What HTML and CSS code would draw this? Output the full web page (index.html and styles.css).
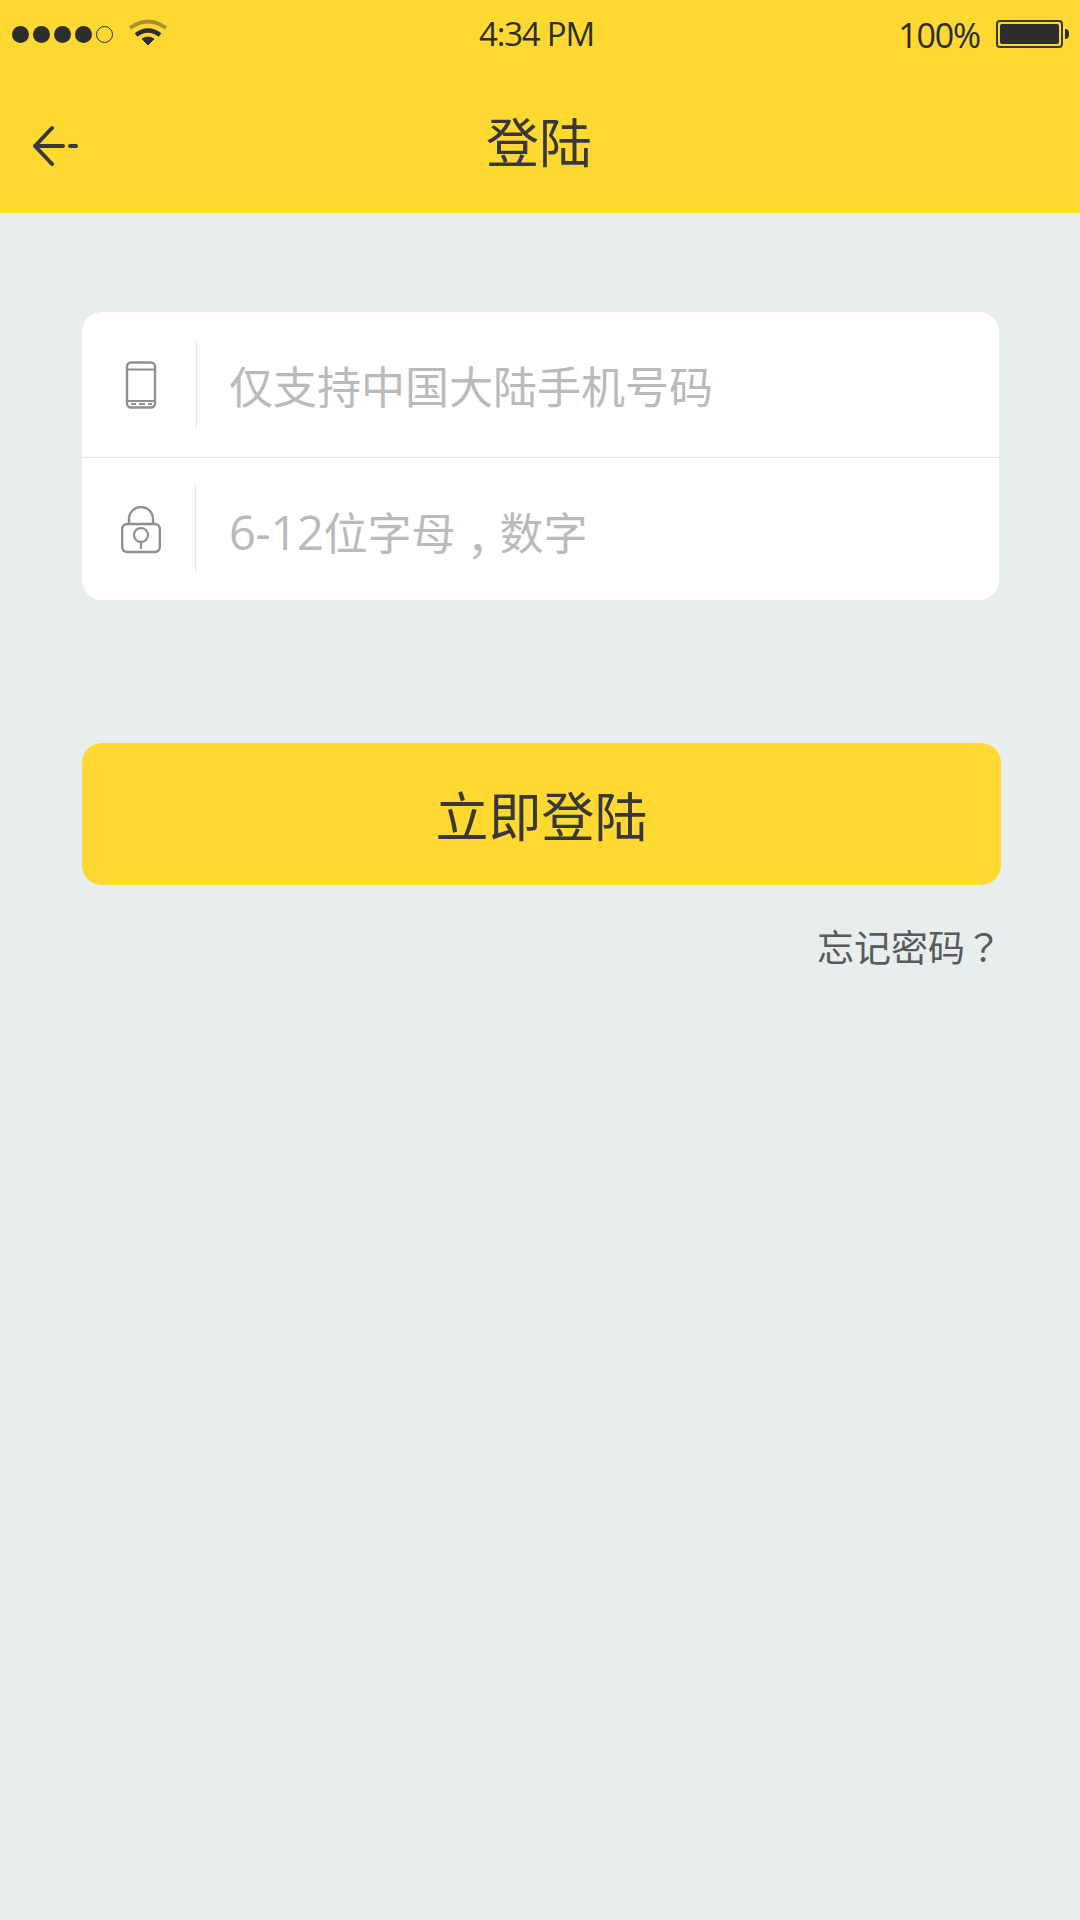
FILE: index.html
```html
<!DOCTYPE html>
<html lang="zh-CN">
<head>
    <meta charset="UTF-8">
    <meta name="viewport" content="width=device-width, initial-scale=1.0">
    <title>登陆</title>
    <link rel="stylesheet" href="styles.css">
</head>
<body>
    <header class="top">
        <div class="status">
            <div class="status-left">
                <span class="dot"></span>
                <span class="dot"></span>
                <span class="dot"></span>
                <span class="dot"></span>
                <span class="dot dot-empty"></span>
                <svg class="wifi" width="40" height="28" viewBox="0 0 40 28">
                    <path d="M2 10 Q20 -3 38 10" fill="none" stroke="#a8902c" stroke-width="4"/>
                    <path d="M8 17 Q20 8 32 17" fill="none" stroke="#2d2d2d" stroke-width="4.5"/>
                    <path d="M14 21 Q20 17 26 21 L20 27 Z" fill="#2d2d2d" stroke="#2d2d2d" stroke-linejoin="round"/>
                </svg>
            </div>
            <div class="time">4:34 PM</div>
            <div class="status-right">
                <span class="percent">100%</span>
                <div class="battery"><div class="battery-fill"></div></div>
                <div class="battery-tip"></div>
            </div>
        </div>
        <nav class="nav">
            <svg class="back" width="50" height="44" viewBox="0 0 50 44">
                <path d="M19 4 L2 22 L19 40 M2 22 H30" fill="none" stroke="#383838" stroke-width="4" stroke-linecap="round" stroke-linejoin="round"/>
                <path d="M37 22 H43" fill="none" stroke="#383838" stroke-width="4" stroke-linecap="round"/>
            </svg>
            <h1 class="nav-title">登陆</h1>
        </nav>
    </header>

    <main class="content">
        <form class="card">
            <div class="field field-phone">
                <div class="field-icon">
                    <svg width="32" height="48" viewBox="0 0 32 48">
                        <rect x="2" y="1.5" width="28" height="45" rx="4" fill="none" stroke="#8f8f8f" stroke-width="2.4"/>
                        <path d="M2 8.5 H30 M2 40 H30" fill="none" stroke="#8f8f8f" stroke-width="1.8"/>
                        <path d="M6 43 H11 M14 43 H20 M23 43 H27" fill="none" stroke="#8f8f8f" stroke-width="2"/>
                    </svg>
                </div>
                <span class="placeholder">仅支持中国大陆手机号码</span>
            </div>
            <div class="field field-pass">
                <div class="field-icon">
                    <svg width="40" height="48" viewBox="0 0 40 48">
                        <path d="M8 18 V13 A12 12 0 0 1 32 13 V18" fill="none" stroke="#8f8f8f" stroke-width="2.4"/>
                        <rect x="1.2" y="18" width="37.6" height="28" rx="5" fill="none" stroke="#8f8f8f" stroke-width="2.4"/>
                        <circle cx="20" cy="29" r="7" fill="none" stroke="#8f8f8f" stroke-width="2.2"/>
                        <path d="M20 36 V43" fill="none" stroke="#8f8f8f" stroke-width="2.2"/>
                    </svg>
                </div>
                <span class="placeholder"><span class="digits">6-12</span>位字母<span class="punct punct-low" lang="zh-TW">，</span>数字</span>
            </div>
        </form>

        <button class="login" type="button">立即登陆</button>
        <a class="forgot">忘记密码<span class="punct" lang="zh-TW">？</span></a>
    </main>
</body>
</html>
```

FILE: styles.css
```css
:root {
    --theme-color: #ffd932;
    --bg-color: #e8eeee;
    --cjk: "Noto Sans CJK SC", "Open Sans", sans-serif;
}

html, body {
    margin: 0;
    height: 100%;
}

body {
    background-color: var(--bg-color);
    font-family: var(--cjk);
    color: #383838;
}

.top {
    height: 213px;
    background-color: var(--theme-color);
}

.status {
    height: 70px;
    position: relative;
    display: flex;
    justify-content: space-between;
    align-items: center;
    padding: 0 11px 2px 12px;
    box-sizing: border-box;
}

.status-left {
    display: flex;
    align-items: center;
    gap: 4px;
}

.dot {
    width: 17px;
    height: 17px;
    border-radius: 50%;
    background-color: #2d2d2d;
}

.dot-empty {
    box-sizing: border-box;
    background: none;
    border: 1px solid #2d2d2d;
}

.wifi {
    margin: -5px 0 0 11px;
}

.time {
    position: absolute;
    left: 479px;
    top: 11px;
    font: 33px/46px "Open Sans", sans-serif;
    letter-spacing: -1.2px;
    color: #2d2d2d;
}

.status-right {
    display: flex;
    align-items: center;
}

.percent {
    font: 34px/46px "Open Sans", sans-serif;
    letter-spacing: -1.2px;
    color: #2d2d2d;
    margin: 2px 16px 0 0;
}

.battery {
    width: 67px;
    height: 28px;
    box-sizing: border-box;
    border: 2px solid #3a3a3a;
    border-radius: 4px;
    padding: 2px;
}

.battery-fill {
    height: 100%;
    background-color: #2d2d2d;
    border-radius: 2px;
}

.battery-tip {
    width: 4px;
    height: 10px;
    margin-left: 2px;
    background-color: #2d2d2d;
    border-radius: 0 5px 5px 0;
}

.nav {
    height: 143px;
    position: relative;
    display: flex;
    align-items: center;
    justify-content: center;
}

.back {
    position: absolute;
    left: 33px;
    top: 54px;
}

.nav-title {
    margin: -3px 0 0 -2px;
    font-size: 53px;
    font-weight: 400;
    line-height: 70px;
}

.content {
    display: flex;
    flex-direction: column;
    padding: 99px 79px 0 82px;
}

.card {
    width: 917px;
    height: 288px;
    background-color: #fff;
    border-radius: 20px;
}

.field {
    display: flex;
    align-items: center;
    box-sizing: border-box;
}

.field-phone {
    height: 146px;
    border-bottom: 1px solid #e4e6e6;
}

.field-pass {
    height: 142px;
}

.field-icon {
    width: 114px;
    height: 90px;
    display: flex;
    align-items: center;
    justify-content: center;
    border-right: 1px solid #e6e6e6;
    margin-right: 33px;
}

.field-icon svg {
    margin-left: 4px;
}

.field-pass .field-icon {
    width: 113px;
    margin-right: 34px;
}

.field-pass .field-icon svg {
    margin-top: 1px;
}

.placeholder {
    font-size: 44px;
    font-weight: 400;
    line-height: 60px;
    color: #bababa;
    margin-left: -1px;
}

.field-pass .placeholder {
    margin-top: 4px;
}

.digits {
    font-family: "Open Sans", sans-serif;
    font-size: 47px;
    letter-spacing: -0.3px;
}

/* TC punctuation sits in the middle of its cell */
.punct {
    font-family: "Noto Sans CJK TC", sans-serif;
}

.punct-low {
    position: relative;
    top: 18px;
}

.login {
    display: block;
    width: 919px;
    height: 142px;
    margin-top: 143px;
    padding: 0;
    border: 0;
    border-radius: 20px;
    background-color: var(--theme-color);
    color: #383838;
    font-family: var(--cjk);
    font-size: 53px;
    font-weight: 400;
    line-height: 70px;
}

.forgot {
    align-self: flex-end;
    margin: 36px -1px 0 0;
    font-size: 37px;
    font-weight: 400;
    line-height: 50px;
    color: #5a5a5a;
}
```
